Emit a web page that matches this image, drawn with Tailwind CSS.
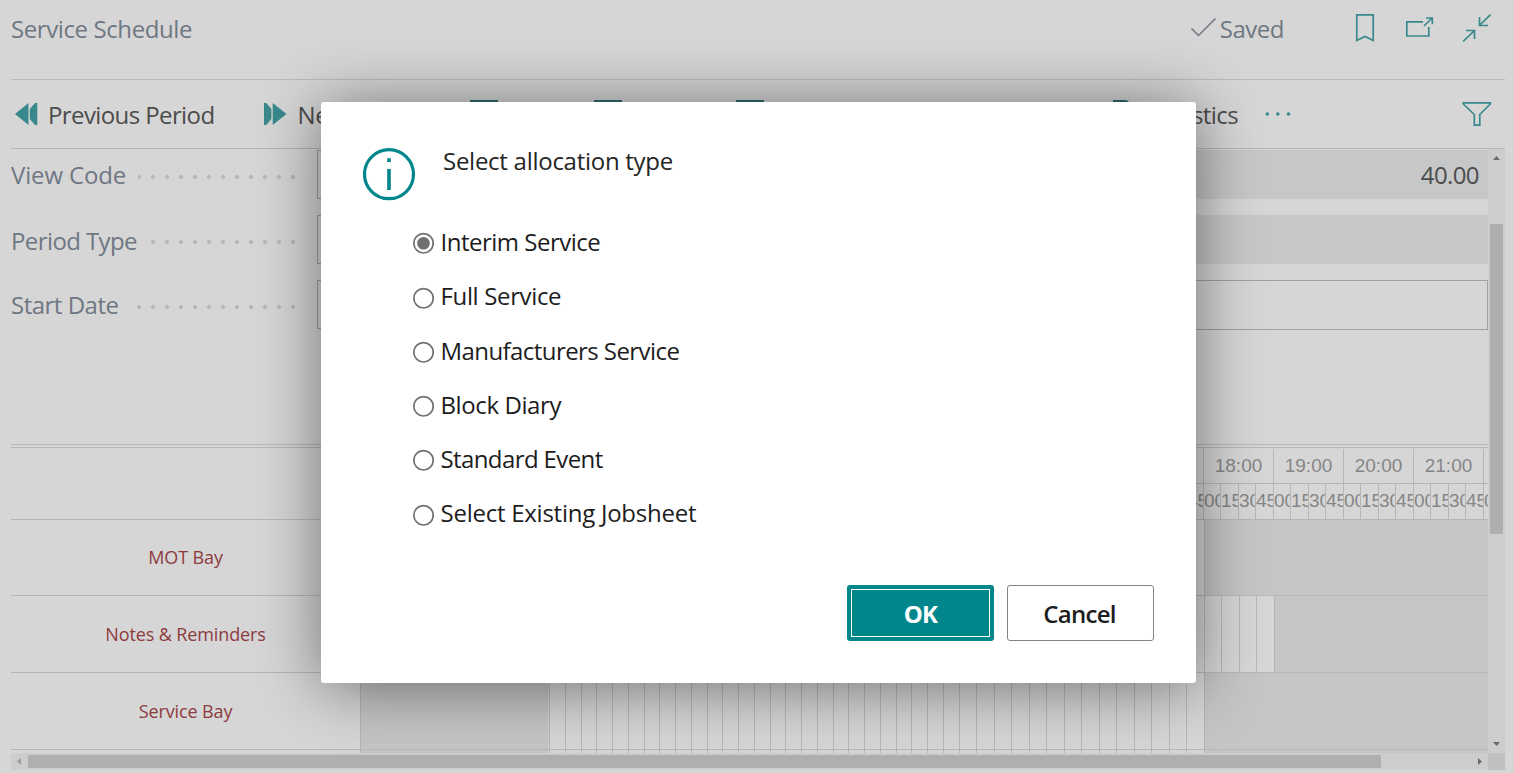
<!DOCTYPE html>
<html lang="en">
<head>
<meta charset="utf-8">
<title>Service Schedule</title>
<script src="https://cdn.jsdelivr.net/npm/@tailwindcss/browser@4"></script>
</head>
<body class="relative flex h-[773px] w-[1514px] flex-col overflow-hidden bg-[#d6d6d6] pl-[11px] pr-[9px] font-['Open_Sans',sans-serif] text-2xl leading-8 whitespace-nowrap">

<!-- Page header -->
<header class="flex h-20 shrink-0 border-b border-[#b9babf] text-[#6f7783]">
  <h1 class="mt-[13px] tracking-[-0.4px]">Service Schedule</h1>
  <div class="ml-auto mt-[13px] flex">
    <svg class="mt-[3px] mr-[3px] h-6 w-7" viewBox="0 0 28 24" fill="none" stroke="#6f7783" stroke-width="1.5"><path d="M2.5 12.5 L9.5 19.5 L26.5 2.5"/></svg>
    <span class="tracking-[-0.5px]">Saved</span>
  </div>
  <div class="ml-[69px] mr-[13px] mt-3 flex text-[#39898c]">
    <svg class="h-8 w-6" viewBox="0 0 24 32" fill="none" stroke="currentColor" stroke-width="1.7"><path d="M3.8 2.8 H20.2 V28.5 L12 24.5 L3.8 28.5 Z"/></svg>
    <svg class="ml-[28px] h-8 w-8" viewBox="0 0 32 32" fill="none" stroke="currentColor" stroke-width="1.7"><path d="M18 9.8 H1.8 V24 H23.8 V15 M19 14 L27 6 M21 6 H27.3 V12.3"/></svg>
    <svg class="ml-[23px] h-8 w-8" viewBox="0 0 32 32" fill="none" stroke="currentColor" stroke-width="1.7"><path d="M30.5 2.7 L19.5 13.5 M19.5 5 V13.5 H28 M3.2 29.3 L14.5 18.5 M6 18.5 H14.5 V27"/></svg>
  </div>
</header>

<!-- Action bar -->
<nav class="flex h-[69px] shrink-0 items-start border-b border-[#b4b6bd] pt-[19px] text-[#4c4c4c]">
  <svg class="ml-[3px] mt-[3px] h-6 w-6 text-[#39898c]" viewBox="0 0 24 24" fill="currentColor"><path d="M1 12 L14.5 1 V23 Z M15.8 7 L21 1 H23.3 V23 H21 L15.8 17 Z"/></svg>
  <span class="ml-2.5 tracking-[-0.6px]">Previous Period</span>
  <svg class="ml-[49px] mt-[3px] h-6 w-6 text-[#39898c]" viewBox="0 0 24 24" fill="currentColor"><path d="M0 1 H2.3 L7.4 7 V17 L2.3 23 H0 Z M8.7 1 L22.5 12 L8.7 23 Z"/></svg>
  <span class="ml-2.5 w-[172px] tracking-[-0.4px]">Next Period</span>
  <div class="mt-px h-7 w-7 border-t-4 border-[#2f6b6d]"></div>
  <div class="ml-24 mt-px h-7 w-7 border-t-4 border-[#2f6b6d]"></div>
  <div class="ml-[114px] mt-px h-7 w-7 border-t-4 border-[#2f6b6d]"></div>
  <div class="ml-[349px] mt-px h-7 w-4 rounded-tr border-t-4 border-[#2f6b6d]"></div>
  <span class="ml-auto tracking-[-0.6px]">Statistics</span>
  <svg class="ml-[27px] mt-[3px] h-6 w-7" viewBox="0 0 28 24" fill="#39898c"><circle cx="2.3" cy="12" r="1.8"/><circle cx="12.8" cy="12" r="1.8"/><circle cx="23.5" cy="12" r="1.8"/></svg>
  <svg class="ml-[167px] mr-[13px] h-8 w-8" viewBox="0 0 32 32" fill="none" stroke="#39898c" stroke-width="1.7"><path d="M3.3 3.8 H30.3 V5 L19.8 15.5 V26.2 H14.3 V15.5 L3.3 5 Z"/></svg>
</nav>

<div class="flex h-[604px] shrink-0">
  <div class="flex w-[1477px] flex-col overflow-hidden">

    <!-- Filter fields -->
    <section class="flex h-[295px] shrink-0 flex-col gap-4 pt-px text-[#6f7783]">
      <div class="flex h-[49px]">
        <label class="mt-[9px] tracking-[-0.15px]">View Code</label>
        <div class="ml-auto mt-5 h-[14px] w-[162px] bg-[radial-gradient(circle,#b8b8b8_1.6px,transparent_2.4px)] bg-[length:14px_14px] bg-right"></div>
        <div class="ml-[17px] w-[430px] border border-[#a0a0a0]"></div>
        <div class="ml-[341px] w-[400px] bg-[#c6c7c9] pr-[9px] pt-[9px] text-right tracking-[-0.6px] text-[#4c4c4c]">40.00</div>
      </div>
      <div class="flex h-[49px]">
        <label class="mt-[10px] tracking-[-0.6px]">Period Type</label>
        <div class="ml-auto mt-5 h-[14px] w-[154px] bg-[radial-gradient(circle,#b8b8b8_1.6px,transparent_2.4px)] bg-[length:14px_14px] bg-right"></div>
        <div class="ml-[17px] w-[430px] border border-[#a0a0a0]"></div>
        <div class="ml-[341px] w-[400px] bg-[#c6c7c9]"></div>
      </div>
      <div class="flex h-[49px]">
        <label class="mt-[9px] tracking-[-0.5px]">Start Date</label>
        <div class="ml-auto mt-5 h-[14px] w-[168px] bg-[radial-gradient(circle,#b8b8b8_1.6px,transparent_2.4px)] bg-[length:14px_14px] bg-right"></div>
        <div class="ml-[17px] w-[430px] border border-[#a0a0a0]"></div>
        <div class="ml-[341px] h-[50px] w-[400px] border border-[#a0a0a0]"></div>
      </div>
    </section>

    <!-- Timeline -->
    <section class="flex flex-1 flex-col border-t border-[#b7b7b7] pt-0.5">
      <div class="flex h-[73px] shrink-0 flex-col items-end border-y border-[#b7b7b7] pt-px font-['Liberation_Sans',sans-serif] text-[19px] text-[#868686]">
        <div id="hours" class="flex h-[35px] w-[302px] overflow-hidden border-b border-[#b7b7b7] leading-[33px]"></div>
        <div id="quarters" class="flex h-[35px] w-[302px] overflow-hidden leading-[33px]"></div>
      </div>
      <div id="rows" class="flex flex-1 flex-col overflow-hidden text-lg text-[#8d3b3e]"></div>
    </section>
  </div>

  <!-- Vertical scrollbar -->
  <div class="flex w-[17px] flex-col items-center bg-[#cdcdcd]">
    <svg class="mt-[7px] h-1 w-[7px]" viewBox="0 0 7 4" fill="#6a6a6a"><path d="M3.5 0 L7 4 H0 Z"/></svg>
    <div class="mt-16 h-[310px] w-[13px] bg-[#afafaf]"></div>
    <svg class="mt-auto mb-[7px] h-1 w-[7px]" viewBox="0 0 7 4" fill="#6a6a6a"><path d="M0 0 H7 L3.5 4 Z"/></svg>
  </div>
</div>

<!-- Horizontal scrollbar -->
<div class="flex h-[17px] w-[1494px] shrink-0 items-center bg-[#cdcdcd]">
  <svg class="ml-1.5 h-[7px] w-1" viewBox="0 0 4 7" fill="#9c9c9c"><path d="M4 0 V7 L0 3.5 Z"/></svg>
  <div class="ml-[7px] h-[13px] w-[1353px] bg-[#afafaf]"></div>
  <svg class="ml-auto mr-1.5 h-[7px] w-1" viewBox="0 0 4 7" fill="#6a6a6a"><path d="M0 0 V7 L4 3.5 Z"/></svg>
  <div class="size-[17px] bg-[#c0c0c0]"></div>
</div>

<!-- Dialog -->
<div role="dialog" class="absolute left-[321px] top-[102px] flex h-[581px] w-[875px] flex-col rounded-[3px] bg-white px-[42px] pt-[46px] text-[#252525] shadow-[0_4px_64px_rgba(0,0,0,0.48)]">
  <div class="flex">
    <svg class="size-[53px]" viewBox="0 0 53 53" fill="none" stroke="#00868b"><circle cx="26" cy="26.2" r="24.5" stroke-width="3.2"/><path d="M26 21 V42 M26 10.3 V14" stroke-width="3.6"/></svg>
    <p class="ml-[27px] -mt-[3px] tracking-[-0.27px]">Select allocation type</p>
  </div>
  <div id="options" class="ml-[49px] mt-[25px] flex flex-col text-[#1d1d1d]">
    <label class="flex h-[54px] items-start gap-[6.5px]"><svg class="mt-[6px] size-[22px]" viewBox="0 0 22 22"><circle cx="11.5" cy="11.3" r="9.7" fill="none" stroke="#707070" stroke-width="1.7"/><circle cx="11.5" cy="11.3" r="6.3" fill="#707070"/></svg><span class="tracking-[-0.5px]">Interim Service</span></label>
    <label class="flex h-[55px] items-start gap-[6.5px]"><svg class="mt-[7px] size-[22px]" viewBox="0 0 22 22"><circle cx="11.5" cy="11.3" r="9.7" fill="none" stroke="#707070" stroke-width="1.7"/></svg><span class="tracking-[-0.35px]">Full Service</span></label>
    <label class="flex h-[54px] items-start gap-[6.5px]"><svg class="mt-[6px] size-[22px]" viewBox="0 0 22 22"><circle cx="11.5" cy="11.3" r="9.7" fill="none" stroke="#707070" stroke-width="1.7"/></svg><span class="tracking-[-0.57px]">Manufacturers Service</span></label>
    <label class="flex h-[54px] items-start gap-[6.5px]"><svg class="mt-[6px] size-[22px]" viewBox="0 0 22 22"><circle cx="11.5" cy="11.3" r="9.7" fill="none" stroke="#707070" stroke-width="1.7"/></svg><span class="tracking-[-0.4px]">Block Diary</span></label>
    <label class="flex h-[54px] items-start gap-[6.5px]"><svg class="mt-[6px] size-[22px]" viewBox="0 0 22 22"><circle cx="11.5" cy="11.3" r="9.7" fill="none" stroke="#707070" stroke-width="1.7"/></svg><span class="tracking-[-0.6px]">Standard Event</span></label>
    <label class="flex h-[54px] items-start gap-[6.5px]"><svg class="mt-[7px] size-[22px]" viewBox="0 0 22 22"><circle cx="11.5" cy="11.3" r="9.7" fill="none" stroke="#707070" stroke-width="1.7"/></svg><span class="tracking-[-0.25px]">Select Existing Jobsheet</span></label>
  </div>
  <div class="mt-auto mb-[42px] flex justify-end gap-[13px]">
    <button class="h-14 w-[147px] rounded-[3px] bg-[#00868b] p-1 font-bold tracking-[-0.8px] text-white"><span class="flex h-full items-center justify-center border border-white pt-0.5">OK</span></button>
    <button class="flex h-14 w-[147px] items-center justify-center rounded-[3px] border border-[#838383] pt-0.5 pr-0.5 font-semibold tracking-[-0.7px] text-[#1d1d1d]">Cancel</button>
  </div>
</div>

<script>
const el = (cls, width, text = '') => {
  const n = document.createElement('div');
  n.className = cls;
  if (width) n.style.width = width + 'px';
  n.textContent = text;
  return n;
};
const hours = document.getElementById('hours');
hours.append(el('shrink-0', 17));
['18:00', '19:00', '20:00', '21:00', ''].forEach(t =>
  hours.append(el('shrink-0 border-l border-[#b7b7b7] text-center', 70, t)));

const quarters = document.getElementById('quarters');
const marks = [1186, 1203, 1220, 1238, 1255, 1273, 1290, 1308, 1325, 1343, 1360, 1378, 1395, 1413, 1430, 1448, 1465, 1483, 1500];
for (let i = 0; i < marks.length - 1; i++)
  quarters.append(el('shrink-0 overflow-hidden border-l border-[#b7b7b7]', marks[i + 1] - marks[i], ['45', '00', '15', '30'][i % 4]));

// Slot boundaries in the open part of the day
const slots = [549, 565, 581, 596, 612, 628, 644, 659, 675, 691, 707, 722, 738, 754, 770, 785, 801, 817, 833, 848, 864, 880, 896, 911, 927, 943, 959, 976, 994, 1011, 1029, 1046, 1064, 1081, 1099, 1116, 1134, 1151, 1169, 1186, 1204, 1221, 1239, 1256, 1274];
const rows = document.getElementById('rows');
[['MOT Bay', 76, 1204], ['Notes & Reminders', 77, 1274], ['Service Bay', 77, 1204], ['', 20, 1204]].forEach(([name, h, end]) => {
  const row = el('flex shrink-0 border-b border-[#b7b7b7]');
  row.style.height = h + 'px';
  row.append(el('flex shrink-0 items-center justify-center pb-px tracking-[-0.12px]', 349, name));
  row.append(el('shrink-0 border-x border-l-[#b3b3b3] border-r-[#cfcfcf] bg-[#c5c5c5]', 189));
  for (let i = 0; slots[i] < end; i++)
    row.append(el('shrink-0 border-l border-[#b7b7b7]', slots[i + 1] - slots[i]));
  row.append(el('flex-1 border-l border-[#b3b3b3] bg-[#c5c5c5]'));
  rows.append(row);
});
</script>
</body>
</html>
